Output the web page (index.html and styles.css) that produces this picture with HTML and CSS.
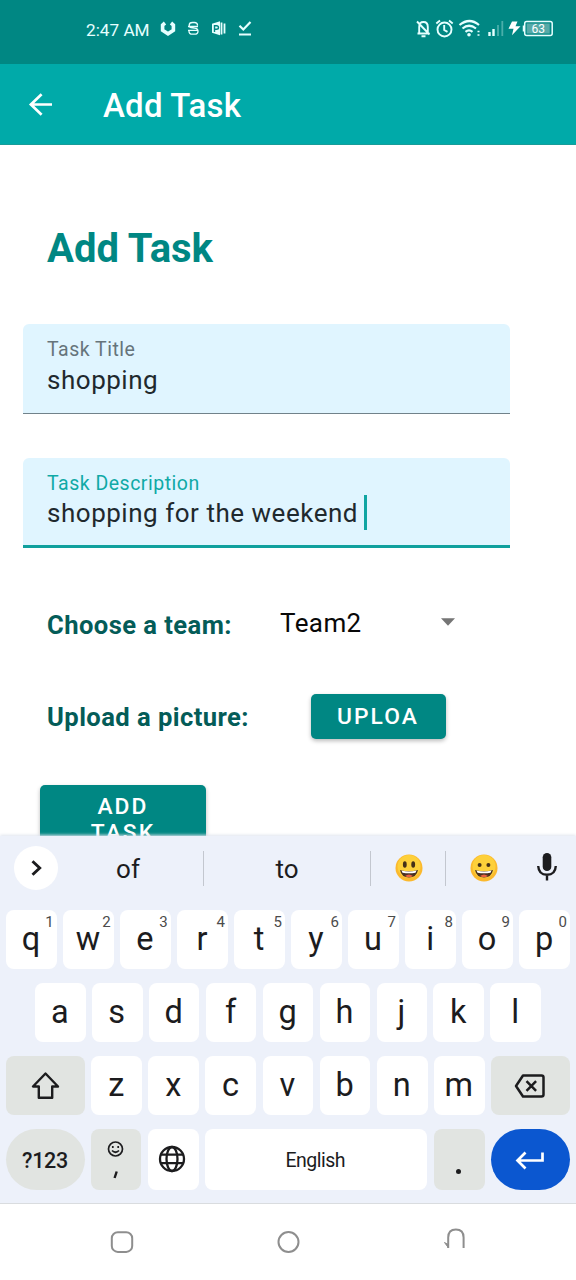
FILE: index.html
```html
<!DOCTYPE html>
<html lang="en">
<head>
<meta charset="utf-8">
<title>Add Task</title>
<link rel="stylesheet" href="styles.css">
</head>
<body>
<div class="phone">
  <header class="status">
    <span class="time">2:47 AM</span>
    <svg class="status-left" width="92" height="18" viewBox="0 0 92 18" fill="none" stroke="#e6ffff">
      <path d="M5 3L2.600 5v5.200l5.400 3.600 5.400-3.600V5L11 3" stroke-width="3.600"/>
      <path d="M37.500 5.500V5q0-2.500-3-2.500h-2q-3.300 0-3.300 2.700 0 2.500 3.300 2.600l2 .4q3.500.2 3.500 3 0 3-3.500 3h-2q-3.500 0-3.500-3v-.5M28 6.500h10M28 10.300h10" stroke-width="1.300"/>
      <path d="M52 3.800l8-2.500v14l-8-2.500z" fill="#e6ffff" stroke="none"/>
      <path d="M61.500 2.500v12M64.500 3.500v10" stroke-width="1.800"/>
      <path d="M54.500 12V5.700h2q2 0 2 1.800t-2 1.800h-2" stroke="#008783" stroke-width="1.400"/>
      <path d="M79.500 5.800l3.800 3.700 7.200-7.500M79 14.500h12" stroke-width="2.200"/>
    </svg>
    <svg class="status-right" width="138" height="20" viewBox="0 0 138 20" fill="none" stroke="#e6ffff" stroke-width="1.900">
      <path d="M1.500 14.500h12M3.200 14V8q0-5 4.300-5 4.300 0 4.300 5v5M1 2.500l12.500 13M5.500 17.300h4"/>
      <circle cx="28.500" cy="10.500" r="7"/><path d="M28.200 6v5l3.300 1.800M20.300 4.500L24 1.500M33 1.500l3.700 3"/>
      <path d="M43.500 6q10-8 19.500 0M46.500 9.500q6.500-5.500 13.500 0M49.500 12.800q3.500-2.800 7 0" stroke-width="2.200"/>
      <circle cx="53" cy="15.700" r="1.800" fill="#e6ffff" stroke="none"/><path d="M61.500 12.500h2M61.500 16h2" stroke-width="1.700"/>
      <path d="M73.500 13v4M77.500 10v7" stroke-width="2.400"/><path d="M82 6v11M86.300 2v15" stroke="#4aaeaa" stroke-width="1.800"/>
      <path d="M96 2.500h5.500l-2 4.700h5l-8.500 9 1.500-6.400h-5z" fill="#fff" stroke="none"/>
      <path d="M107.500 6.500v6" stroke-width="1.500"/><rect x="108.700" y="2.500" width="27.500" height="14" rx="2" stroke-width="1.500"/>
      <rect x="110.700" y="4.500" width="23" height="10" fill="#56aaa8" stroke="none"/>
      <text class="battery" x="115.500" y="14">63</text>
    </svg>
  </header>
  <div class="appbar">
    <svg width="24" height="24" viewBox="0 0 24 24" fill="none" stroke="#fff" stroke-width="2.700"><path d="M23 12.500H2.500M12.600 2.300L1.900 12.500l10.700 10.200"/></svg>
    <span class="appbar-title">Add Task</span>
  </div>
  <main class="form">
    <h1 class="heading">Add Task</h1>
    <div class="field">
      <div class="label">Task Title</div>
      <div class="value">shopping</div>
    </div>
    <div class="field focused">
      <div class="label">Task Description</div>
      <div class="value">shopping for the weekend<span class="caret"></span></div>
    </div>
    <div class="row team">
      <span class="row-label">Choose a team:</span>
      <span class="select">Team2</span>
      <svg class="arrow" width="14" height="8" viewBox="0 0 14 8"><path d="M0 .3h14L7 7.700z" fill="#757575"/></svg>
    </div>
    <div class="row upload">
      <span class="row-label">Upload a picture:</span>
      <button class="btn btn-upload">UPLOA</button>
    </div>
    <button class="btn btn-add">ADD<br>TASK</button>
  </main>
  <section class="keyboard">
    <div class="suggest">
      <span class="expand"><svg width="12" height="18" viewBox="0 0 12 18" fill="none" stroke="#1c1c1e" stroke-width="2.900"><path d="M2.500 2.200L9.700 9l-7.200 6.800"/></svg></span>
      <span class="word">of</span><i class="bar"></i>
      <span class="word wide">to</span><i class="bar"></i>
      <span class="emoji"><svg width="28" height="28" viewBox="0 0 28 28"><circle cx="14" cy="14" r="13.500" fill="#fbb92d"/><circle cx="14" cy="12.500" r="11.500" fill="#fdd03a"/><ellipse cx="9.800" cy="10.500" rx="1.900" ry="3.300" fill="#453018"/><ellipse cx="18.200" cy="10.500" rx="1.900" ry="3.300" fill="#453018"/><path d="M5 16q9 2.500 18 0-1.500 7.500-9 7.500T5 16z" fill="#4a3020"/><path d="M6.500 16.500q7.500 2 15 0l-1 2.300q-6.500 1-13 0z" fill="#fff"/><path d="M10 22q4-3 8 0-4 2.500-8 0z" fill="#e9603f"/></svg></span><i class="bar"></i>
      <span class="emoji"><svg width="28" height="28" viewBox="0 0 28 28"><circle cx="14" cy="14" r="13.500" fill="#fbb92d"/><circle cx="14" cy="12.500" r="11.500" fill="#fdd03a"/><circle cx="9.600" cy="11" r="2" fill="#453018"/><circle cx="18.400" cy="11" r="2" fill="#453018"/><path d="M5 16q9 2.500 18 0-1.500 7.500-9 7.500T5 16z" fill="#4a3020"/><path d="M6.500 16.500q7.500 2 15 0l-1 2.300q-6.500 1-13 0z" fill="#fff"/><path d="M10 22q4-3 8 0-4 2.500-8 0z" fill="#e9603f"/></svg></span>
      <span class="mic"><svg width="20" height="28" viewBox="0 0 20 28" fill="none" stroke="#1c1c1e" stroke-width="2.400"><rect x="5.700" y="0" width="8.600" height="18" rx="4.300" fill="#1c1c1e" stroke="none"/><path d="M1.200 13q.5 8.800 8.800 8.800T18.800 13M10 21.500V27.500"/></svg></span>
    </div>
    <div class="keys">
      <span class="key">q<sup>1</sup></span><span class="key">w<sup>2</sup></span><span class="key">e<sup>3</sup></span><span class="key">r<sup>4</sup></span><span class="key">t<sup>5</sup></span><span class="key">y<sup>6</sup></span><span class="key">u<sup>7</sup></span><span class="key">i<sup>8</sup></span><span class="key">o<sup>9</sup></span><span class="key">p<sup>0</sup></span>
    </div>
    <div class="keys inset">
      <span class="key">a</span><span class="key">s</span><span class="key">d</span><span class="key">f</span><span class="key">g</span><span class="key">h</span><span class="key">j</span><span class="key">k</span><span class="key">l</span>
    </div>
    <div class="keys">
      <span class="key side gray"><svg width="28" height="28" viewBox="0 0 28 28" fill="none" stroke="#1c1c1e" stroke-width="2.400" stroke-linejoin="round"><path d="M13.500 1.500L1 14.500h5.800v11.300h13.400V14.500H26z"/></svg></span>
      <span class="key">z</span><span class="key">x</span><span class="key">c</span><span class="key">v</span><span class="key">b</span><span class="key">n</span><span class="key">m</span>
      <span class="key side gray"><svg width="31" height="25" viewBox="0 0 31 25" fill="none" stroke="#1c1c1e" stroke-width="2.500" stroke-linejoin="round"><path d="M8 2.500H26.500q2 0 2 2v17q0 2-2 2H8L1 13zM11.500 8.200l9.600 9.600M21.100 8.200l-9.600 9.600"/></svg></span>
    </div>
    <div class="keys last">
      <span class="key side gray pill symbols">?123</span>
      <span class="key gray comma"><svg width="16" height="38" viewBox="0 0 16 38" fill="none" stroke="#1c1c1e" stroke-width="1.700"><circle cx="7.500" cy="8" r="7"/><path d="M4 9.500q3.500 3.500 7 0"/><path d="M4.800 5v2M10.200 5v2"/><path d="M8.700 30.500L6.600 37" stroke-width="2.400"/></svg></span>
      <span class="key globe"><svg width="27" height="27" viewBox="0 0 27 27" fill="none" stroke="#1c1c1e" stroke-width="2.300"><circle cx="13" cy="14" r="12"/><ellipse cx="13" cy="14" rx="5.500" ry="12"/><path d="M1.500 9.700h23M1.500 18.200h23"/></svg></span>
      <span class="key space">English</span>
      <span class="key gray period"><i class="dot"></i></span>
      <span class="key side enter pill"><svg width="28" height="18" viewBox="0 0 28 18" fill="none" stroke="#fff" stroke-width="2.700"><path d="M25.500 1.500v8H0.500M8.500 1.500l-8 8 8 8"/></svg></span>
    </div>
  </section>
  <nav class="nav">
    <svg width="24" height="24" viewBox="0 0 24 24" fill="none" stroke="#8e8e8e" stroke-width="2"><rect x="1.800" y="2.300" width="20.400" height="19.600" rx="6"/></svg>
    <svg width="24" height="24" viewBox="0 0 24 24" fill="none" stroke="#8e8e8e" stroke-width="2"><circle cx="11.500" cy="12" r="10"/></svg>
    <svg width="24" height="24" viewBox="0 0 24 24" fill="none" stroke="#8e8e8e" stroke-width="2"><path d="M4.200 18V7.500q0-8 7.700-8t7.700 8V18"/><path d="M.500 12.500l3.700 5v-3z" fill="#8e8e8e" stroke-width="1"/></svg>
  </nav>
</div>
</body>
</html>
```
FILE: styles.css
```css
* { box-sizing: border-box; }
body { margin: 0; background: #fff; font-family: Roboto, "Liberation Sans", sans-serif; }
svg { display: block; flex: none; overflow: visible; }
.phone { width: 576px; height: 1280px; display: flex; flex-direction: column; overflow: hidden; }

.status { height: 64px; flex: none; display: flex; align-items: center; padding: 0 22px 6px 86px; background: #008783; color: #e6ffff; }
.time { font-size: 17.2px; width: 74px; padding-top: 2px; white-space: nowrap; }
.status-right { margin-left: auto; }
.battery { font: 12px Roboto, sans-serif; fill: #fff; stroke: none; }

.appbar { height: 81px; flex: none; display: flex; align-items: center; padding-left: 29px; background: #00aaa9; color: #fff; border-bottom: 1px solid #189c99; }
.appbar-title { margin-left: 50px; padding-top: 2px; font-size: 33px; font-weight: 500; letter-spacing: .2px; }

.form { height: 691px; flex: none; overflow: hidden; padding: 80px 0 0 23px; display: flex; flex-direction: column; align-items: flex-start; }
.heading { margin: 0 0 51px 24px; font-size: 40px; line-height: 48px; font-weight: 700; color: #008783; }
.field { width: 487px; height: 90px; flex: none; margin-bottom: 44px; padding: 14px 24px 0; background: #e0f5ff; border-bottom: 1px solid #71828a; border-radius: 6px 6px 0 0; }
.label { font-size: 19.5px; line-height: 23px; letter-spacing: .5px; color: #66747b; }
.value { font-size: 26px; line-height: 38px; letter-spacing: .52px; color: #1f292e; display: flex; align-items: center; white-space: nowrap; }
.focused { border-bottom: 3px solid #10a09d; margin-bottom: 54px; }
.focused .label { color: #10a9a6; }
.focused .value { line-height: 37px; }
.caret { width: 3px; height: 35px; margin: -3px 0 0 6px; background: #10a5a2; }
.row { display: flex; align-items: center; padding-left: 24px; height: 45px; flex: none; }
.row-label { font-size: 25.6px; font-weight: 700; letter-spacing: .43px; color: #045c58; white-space: nowrap; }
.team { margin-bottom: 47px; }
.team .row-label { width: 233px; }
.select { width: 162px; padding-bottom: 3px; font-size: 26px; letter-spacing: .4px; color: #080808; }
.arrow { margin: -6px 0 0 -1px; }
.upload { margin-bottom: 46px; }
.upload .row-label { width: 264px; }
.btn { margin: 0; border: 0; border-radius: 5px; background: #008783; color: #fff; font: 500 22.8px/26px Roboto, sans-serif; letter-spacing: 2.1px; box-shadow: 0 2px 4px #0004; padding: 0; }
.btn-upload { width: 135px; height: 45px; padding-right: 1px; }
.btn-add { width: 166px; height: 70px; flex: none; margin-left: 17px; }

.keyboard { height: 368px; flex: none; background: #edf1fa; border-bottom: 1px solid #d9dcdf; color: #1c1c1e; box-shadow: 0 -1px 3px #dfe4ed; }
.suggest { height: 74px; display: flex; align-items: center; padding: 0 0 10px 14px; }
.expand { width: 44px; height: 44px; border-radius: 50%; background: #fff; display: flex; align-items: center; justify-content: center; }
.word { width: 145px; padding: 2px 5px 0 0; text-align: center; font-size: 26px; }
.wide { width: 166px; padding-right: 0; }
.bar { width: 1px; height: 35px; background: #c3c7cf; }
.emoji { width: 74px; padding-left: 1px; display: flex; justify-content: center; }
.mic { margin: -2px 0 0 17px; }
.keys { display: flex; gap: 6.3px; height: 59px; padding: 0 6px; margin-bottom: 14px; }
.inset { padding: 0 35px; }
.key { position: relative; flex: 1 1 0; display: flex; align-items: center; justify-content: center; padding: 0 1px 2px 0; border-radius: 8px; background: #fff; font-size: 32.5px; }
.key sup { position: absolute; right: 3px; top: 4px; font-size: 15px; line-height: 17px; color: #4b4b4b; }
.side { flex: 0 0 79px; padding: 0; }
.gray { background: #e1e4e1; }
.last { height: 61px; }
.pill { border-radius: 31px; }
.symbols { font-size: 21.5px; font-weight: 500; padding: 2px 1px 0 0; letter-spacing: -.3px; }
.space { flex: 0 0 222px; font-size: 19.5px; padding: 2px 2px 0 0; letter-spacing: -.5px; }
.comma { padding: 0; }
.dot { width: 5px; height: 5px; border-radius: 50%; background: #1c1c1e; margin-top: 25px; }
.enter { background: #0b57d0; color: #fff; }

.nav { flex: 1; display: flex; justify-content: space-between; padding: 26px 108px 0 110px; background: #fff; }
```
